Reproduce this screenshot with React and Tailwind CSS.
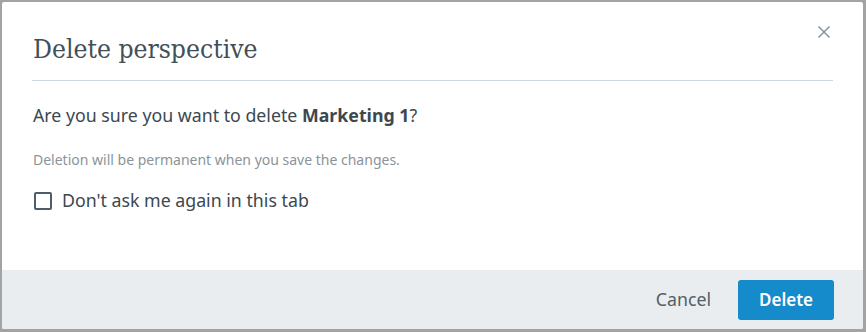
export default function App() {
  return (
    <div className="w-[866px] h-[332px] bg-[#a3a3a3] pt-[2px] pl-[2px] pr-[3px] pb-[3px]">
      <div className="w-full h-full bg-white rounded-[2px] flex flex-col overflow-hidden" style={{ fontFamily: '"Noto Sans", sans-serif' }}>
        <div className="flex-1 px-[30px] relative">
          <div className="pt-[30px] pb-[14px] border-b border-[#cfd8de] text-[26.25px] leading-[34px] text-[#434f57] pl-[1px]" style={{ fontFamily: '"DejaVu Serif", serif', fontStretch: 'condensed' }}>
            Delete perspective
          </div>
          <button className="absolute top-[24px] right-[33px] w-[12px] h-[12px] flex items-center justify-center">
            <svg width="12" height="12" viewBox="0 0 12 12">
              <path d="M0.5 0.5 L11.5 11.5 M11.5 0.5 L0.5 11.5" stroke="#7e8e96" strokeWidth="1.4" />
            </svg>
          </button>
          <p className="mt-[22px] text-[17.75px] leading-[24px] text-[#3c4850] pl-[1px]">
            Are you sure you want to delete <span className="font-bold">Marketing 1</span>?
          </p>
          <p className="mt-[23px] text-[14px] leading-[20px] text-[#8a949a] pl-[1px]">
            Deletion will be permanent when you save the changes.
          </p>
          <label className="mt-[18px] flex items-center gap-[10px] text-[17.75px] leading-[24px] text-[#3c4850]">
            <span className="ml-[2px] mt-[1px] w-[18px] h-[18px] border-2 border-[#4b5e69] rounded-[2px] inline-block" />
            Don't ask me again in this tab
          </label>
        </div>
        <div className="h-[59px] bg-[#e9edf0] flex items-center justify-end pr-[29px] gap-[27px]">
          <button className="text-[17.75px] text-[#545f66]">Cancel</button>
          <button className="w-[96px] h-[40px] rounded-[3px] bg-[#168bcb] text-white text-[17px] font-semibold">Delete</button>
        </div>
      </div>
    </div>
  );
}
